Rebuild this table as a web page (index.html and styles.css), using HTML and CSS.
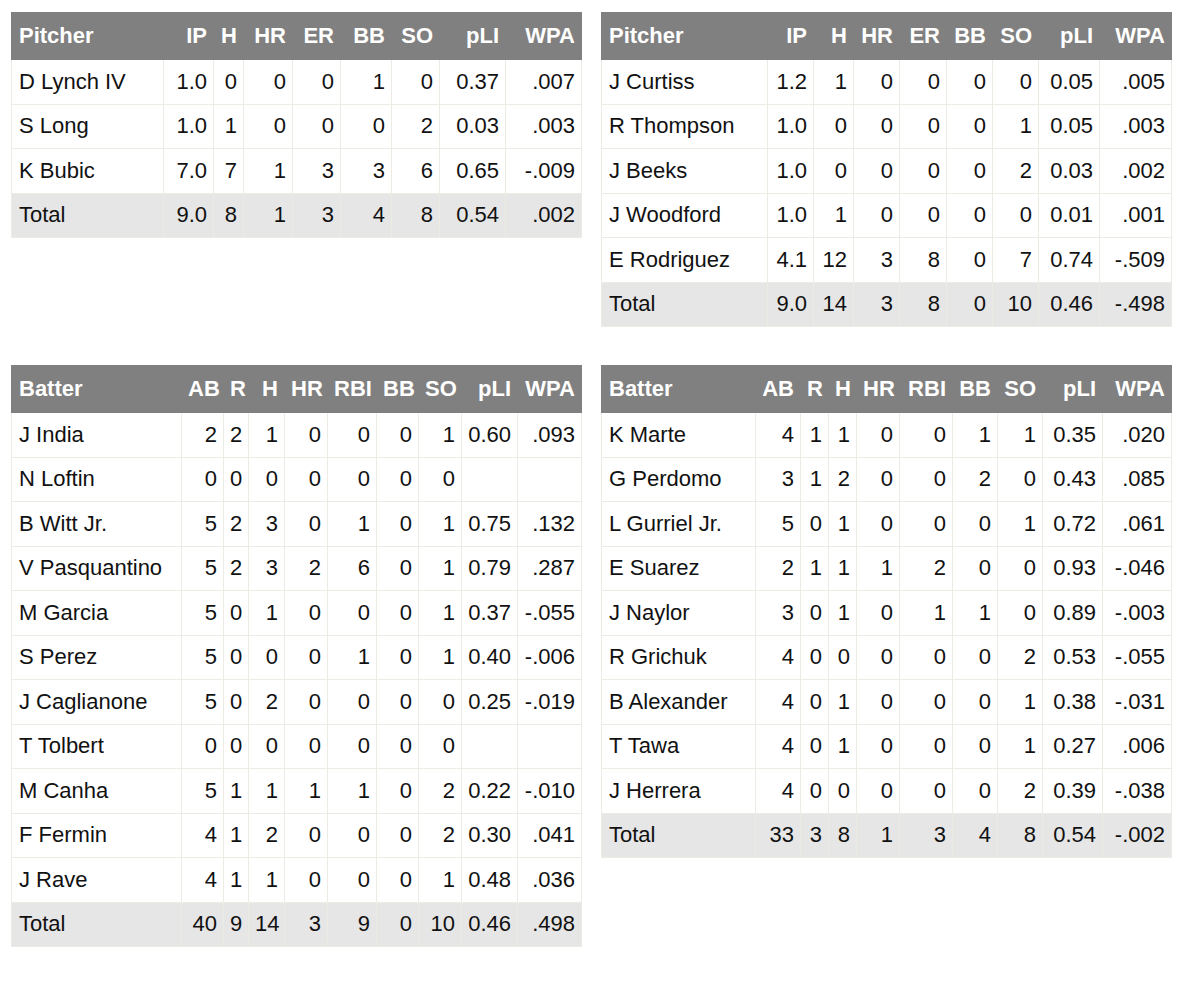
FILE: index.html
```html
<!DOCTYPE html>
<html>
<head>
<meta charset="utf-8">
<link rel="stylesheet" href="styles.css">
</head>
<body>
<div class="grid">
  <table class="box pa">
    <colgroup><col><col><col><col><col><col><col><col><col></colgroup>
    <thead><tr><th class="name">Pitcher</th><th>IP</th><th>H</th><th>HR</th><th>ER</th><th>BB</th><th>SO</th><th>pLI</th><th>WPA</th></tr></thead>
    <tbody>
      <tr><td class="name">D Lynch IV</td><td>1.0</td><td>0</td><td>0</td><td>0</td><td>1</td><td>0</td><td>0.37</td><td>.007</td></tr>
      <tr><td class="name">S Long</td><td>1.0</td><td>1</td><td>0</td><td>0</td><td>0</td><td>2</td><td>0.03</td><td>.003</td></tr>
      <tr><td class="name">K Bubic</td><td>7.0</td><td>7</td><td>1</td><td>3</td><td>3</td><td>6</td><td>0.65</td><td>-.009</td></tr>
      <tr class="total"><td class="name">Total</td><td>9.0</td><td>8</td><td>1</td><td>3</td><td>4</td><td>8</td><td>0.54</td><td>.002</td></tr>
    </tbody>
  </table>

  <table class="box pb">
    <colgroup><col><col><col><col><col><col><col><col><col></colgroup>
    <thead><tr><th class="name">Pitcher</th><th>IP</th><th>H</th><th>HR</th><th>ER</th><th>BB</th><th>SO</th><th>pLI</th><th>WPA</th></tr></thead>
    <tbody>
      <tr><td class="name">J Curtiss</td><td>1.2</td><td>1</td><td>0</td><td>0</td><td>0</td><td>0</td><td>0.05</td><td>.005</td></tr>
      <tr><td class="name">R Thompson</td><td>1.0</td><td>0</td><td>0</td><td>0</td><td>0</td><td>1</td><td>0.05</td><td>.003</td></tr>
      <tr><td class="name">J Beeks</td><td>1.0</td><td>0</td><td>0</td><td>0</td><td>0</td><td>2</td><td>0.03</td><td>.002</td></tr>
      <tr><td class="name">J Woodford</td><td>1.0</td><td>1</td><td>0</td><td>0</td><td>0</td><td>0</td><td>0.01</td><td>.001</td></tr>
      <tr><td class="name">E Rodriguez</td><td>4.1</td><td>12</td><td>3</td><td>8</td><td>0</td><td>7</td><td>0.74</td><td>-.509</td></tr>
      <tr class="total"><td class="name">Total</td><td>9.0</td><td>14</td><td>3</td><td>8</td><td>0</td><td>10</td><td>0.46</td><td>-.498</td></tr>
    </tbody>
  </table>

  <table class="box ba">
    <colgroup><col><col><col><col><col><col><col><col><col><col></colgroup>
    <thead><tr><th class="name">Batter</th><th>AB</th><th>R</th><th>H</th><th>HR</th><th>RBI</th><th>BB</th><th>SO</th><th>pLI</th><th>WPA</th></tr></thead>
    <tbody>
      <tr><td class="name">J India</td><td>2</td><td>2</td><td>1</td><td>0</td><td>0</td><td>0</td><td>1</td><td>0.60</td><td>.093</td></tr>
      <tr><td class="name">N Loftin</td><td>0</td><td>0</td><td>0</td><td>0</td><td>0</td><td>0</td><td>0</td><td></td><td></td></tr>
      <tr><td class="name">B Witt Jr.</td><td>5</td><td>2</td><td>3</td><td>0</td><td>1</td><td>0</td><td>1</td><td>0.75</td><td>.132</td></tr>
      <tr><td class="name">V Pasquantino</td><td>5</td><td>2</td><td>3</td><td>2</td><td>6</td><td>0</td><td>1</td><td>0.79</td><td>.287</td></tr>
      <tr><td class="name">M Garcia</td><td>5</td><td>0</td><td>1</td><td>0</td><td>0</td><td>0</td><td>1</td><td>0.37</td><td>-.055</td></tr>
      <tr><td class="name">S Perez</td><td>5</td><td>0</td><td>0</td><td>0</td><td>1</td><td>0</td><td>1</td><td>0.40</td><td>-.006</td></tr>
      <tr><td class="name">J Caglianone</td><td>5</td><td>0</td><td>2</td><td>0</td><td>0</td><td>0</td><td>0</td><td>0.25</td><td>-.019</td></tr>
      <tr><td class="name">T Tolbert</td><td>0</td><td>0</td><td>0</td><td>0</td><td>0</td><td>0</td><td>0</td><td></td><td></td></tr>
      <tr><td class="name">M Canha</td><td>5</td><td>1</td><td>1</td><td>1</td><td>1</td><td>0</td><td>2</td><td>0.22</td><td>-.010</td></tr>
      <tr><td class="name">F Fermin</td><td>4</td><td>1</td><td>2</td><td>0</td><td>0</td><td>0</td><td>2</td><td>0.30</td><td>.041</td></tr>
      <tr><td class="name">J Rave</td><td>4</td><td>1</td><td>1</td><td>0</td><td>0</td><td>0</td><td>1</td><td>0.48</td><td>.036</td></tr>
      <tr class="total"><td class="name">Total</td><td>40</td><td>9</td><td>14</td><td>3</td><td>9</td><td>0</td><td>10</td><td>0.46</td><td>.498</td></tr>
    </tbody>
  </table>

  <table class="box bb">
    <colgroup><col><col><col><col><col><col><col><col><col><col></colgroup>
    <thead><tr><th class="name">Batter</th><th>AB</th><th>R</th><th>H</th><th>HR</th><th>RBI</th><th>BB</th><th>SO</th><th>pLI</th><th>WPA</th></tr></thead>
    <tbody>
      <tr><td class="name">K Marte</td><td>4</td><td>1</td><td>1</td><td>0</td><td>0</td><td>1</td><td>1</td><td>0.35</td><td>.020</td></tr>
      <tr><td class="name">G Perdomo</td><td>3</td><td>1</td><td>2</td><td>0</td><td>0</td><td>2</td><td>0</td><td>0.43</td><td>.085</td></tr>
      <tr><td class="name">L Gurriel Jr.</td><td>5</td><td>0</td><td>1</td><td>0</td><td>0</td><td>0</td><td>1</td><td>0.72</td><td>.061</td></tr>
      <tr><td class="name">E Suarez</td><td>2</td><td>1</td><td>1</td><td>1</td><td>2</td><td>0</td><td>0</td><td>0.93</td><td>-.046</td></tr>
      <tr><td class="name">J Naylor</td><td>3</td><td>0</td><td>1</td><td>0</td><td>1</td><td>1</td><td>0</td><td>0.89</td><td>-.003</td></tr>
      <tr><td class="name">R Grichuk</td><td>4</td><td>0</td><td>0</td><td>0</td><td>0</td><td>0</td><td>2</td><td>0.53</td><td>-.055</td></tr>
      <tr><td class="name">B Alexander</td><td>4</td><td>0</td><td>1</td><td>0</td><td>0</td><td>0</td><td>1</td><td>0.38</td><td>-.031</td></tr>
      <tr><td class="name">T Tawa</td><td>4</td><td>0</td><td>1</td><td>0</td><td>0</td><td>0</td><td>1</td><td>0.27</td><td>.006</td></tr>
      <tr><td class="name">J Herrera</td><td>4</td><td>0</td><td>0</td><td>0</td><td>0</td><td>0</td><td>2</td><td>0.39</td><td>-.038</td></tr>
      <tr class="total"><td class="name">Total</td><td>33</td><td>3</td><td>8</td><td>1</td><td>3</td><td>4</td><td>8</td><td>0.54</td><td>-.002</td></tr>
    </tbody>
  </table>
</div>
</body>
</html>
```

FILE: styles.css
```css
html, body {
  margin: 0;
  padding: 0;
  background: #ffffff;
}

body {
  font-family: "Liberation Sans", Arial, Helvetica, sans-serif;
  color: #111111;
}

.grid {
  display: grid;
  grid-template-columns: 570px 570px;
  column-gap: 20px;
  row-gap: 38px;
  align-items: start;
  padding: 12px 0 0 11px;
}

.box {
  width: 570px;
  table-layout: fixed;
  border-collapse: collapse;
  font-size: 22px;
  line-height: 26px;
  border: 1px solid #e6e6de;
}

.box th,
.box td {
  padding: 0 6px 0 6px;
  text-align: right;
  white-space: nowrap;
  overflow: hidden;
}

.box th {
  height: 46px;
  background: #808080;
  color: #ffffff;
  font-weight: bold;
  border: 1px solid #808080;
}

.box td {
  height: 43.5px;
  border: 1px solid #ecece4;
}

.box .name {
  text-align: left;
  padding-left: 7px;
}

.box .total td {
  background: #e6e6e6;
}

.pa col:nth-child(1) { width: 152px; }
.pa col:nth-child(2) { width: 50px; }
.pa col:nth-child(3) { width: 30px; }
.pa col:nth-child(4) { width: 49px; }
.pa col:nth-child(5) { width: 48px; }
.pa col:nth-child(6) { width: 51px; }
.pa col:nth-child(7) { width: 48px; }
.pa col:nth-child(8) { width: 66px; }
.pa col:nth-child(9) { width: 76px; }

.pb col:nth-child(1) { width: 166px; }
.pb col:nth-child(2) { width: 46px; }
.pb col:nth-child(3) { width: 40px; }
.pb col:nth-child(4) { width: 46px; }
.pb col:nth-child(5) { width: 47px; }
.pb col:nth-child(6) { width: 46px; }
.pb col:nth-child(7) { width: 46px; }
.pb col:nth-child(8) { width: 61px; }
.pb col:nth-child(9) { width: 72px; }

.ba col:nth-child(1) { width: 170px; }
.ba col:nth-child(2) { width: 42px; }
.ba col:nth-child(3) { width: 25px; }
.ba col:nth-child(4) { width: 36px; }
.ba col:nth-child(5) { width: 43px; }
.ba col:nth-child(6) { width: 49px; }
.ba col:nth-child(7) { width: 42px; }
.ba col:nth-child(8) { width: 43px; }
.ba col:nth-child(9) { width: 56px; }
.ba col:nth-child(10) { width: 64px; }

.bb col:nth-child(1) { width: 154px; }
.bb col:nth-child(2) { width: 45px; }
.bb col:nth-child(3) { width: 28px; }
.bb col:nth-child(4) { width: 28px; }
.bb col:nth-child(5) { width: 43px; }
.bb col:nth-child(6) { width: 53px; }
.bb col:nth-child(7) { width: 45px; }
.bb col:nth-child(8) { width: 45px; }
.bb col:nth-child(9) { width: 60px; }
.bb col:nth-child(10) { width: 69px; }
```
